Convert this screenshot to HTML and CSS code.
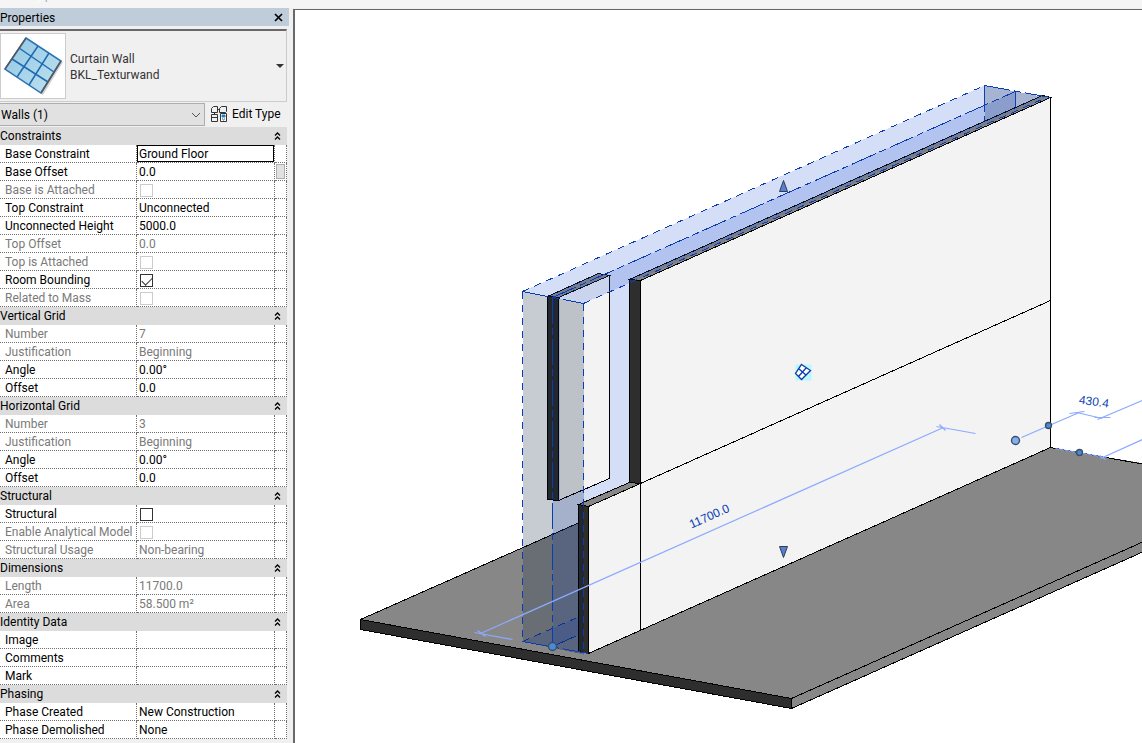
FILE: index.html
```html
<!DOCTYPE html>
<html lang="en">
<head>
<meta charset="utf-8">
<title>Properties</title>
<link rel="stylesheet" href="styles.css">
</head>
<body>
<svg class="defs" width="0" height="0" aria-hidden="true">
  <symbol id="fold" viewBox="0 0 7 8"><path d="M1 3.500L3.500 1L6 3.500M1 7.500L3.500 5L6 7.500" fill="none" stroke="#000" stroke-width="1.300"/></symbol>
</svg>
<div class="ribbon"><span class="ribbon-text">Modify <span class="ribbon-bar">|</span> Walls</span></div>
<div class="workspace">
<aside class="panel">
  <header class="panel-title">
    <span>Properties</span>
    <button class="close" type="button" aria-label="Close"><svg width="9" height="9" viewBox="0 0 9 9"><path d="M1 1L8 8M8 1L1 8" stroke="#000" stroke-width="1.700"/></svg></button>
  </header>
  <button class="type-picker" type="button">
    <span class="thumb">
      <svg width="64" height="64" viewBox="0 0 64 64">
        <defs><linearGradient id="glass" x1="0" y1="0" x2="1" y2="1"><stop offset="0" stop-color="#8fc7e4"/><stop offset="1" stop-color="#c2e2ef"/></linearGradient></defs>
        <path d="M26 5L62 28L42 61L5 37Z" fill="#9aa3aa" opacity=".5"/>
        <path d="M25 4L60 27L40 59L4 35Z" fill="url(#glass)" stroke="#2a74b4" stroke-width="1.500"/>
        <path d="M37 12L16 43M48 19L28 51M18 14L53 38M11 25L47 48" stroke="#1f6bb3" stroke-width="1.500"/>
        <path d="M25 4L4 35M60 27L40 59" stroke="#55585f" stroke-width="1.500"/>
      </svg>
    </span>
    <span class="type-name">Curtain Wall<br>BKL_Texturwand</span>
    <svg class="caret" width="8" height="4" viewBox="0 0 8 4"><path d="M0 0H8L4 4Z" fill="#333"/></svg>
  </button>
  <div class="filter">
    <div class="select-wrap">
      <select class="filter-select" aria-label="Category"><option>Walls (1)</option></select>
      <svg class="select-arrow" width="10" height="6" viewBox="0 0 10 6"><path d="M1 1L5 5L9 1" fill="none" stroke="#555"/></svg>
    </div>
    <button class="edit-type" type="button">
      <svg width="16" height="16" viewBox="0 0 16 16" fill="none" stroke="#333"><path d="M.5 2.500L2.500.5H6.500V6.500H.5ZM8.500 2.500L10.500.5H15.500V5.500L14.500 6.500H8.500ZM6.500 3.500H8.500M.5 8.500H6.500V15.500H.5ZM.5 11.500H6.500M3.500 6.500V8.500"/><path d="M9.500 7.500H15.500V15.500H9.500Z" fill="#fff"/><path d="M11 9H14V11H11Z" fill="#1682d4" stroke="#1682d4"/><path d="M11 13H12M13 13H14M12 14H13" stroke="#555"/></svg>
      <span>Edit Type</span>
    </button>
  </div>
  <table class="props">
    <colgroup><col class="c-name"><col class="c-value"><col class="c-end"></colgroup>
    <tbody>
      <tr class="group"><th colspan="3"><button type="button">Constraints<svg width="7" height="8"><use href="#fold"/></svg></button></th></tr>
      <tr><th><label for="base">Base Constraint</label></th><td class="editing"><input id="base" class="edit" type="text" value="Ground Floor"></td><td></td></tr>
      <tr><th>Base Offset</th><td>0.0</td><td class="assoc"><button class="assoc-button" type="button" aria-label="Associate parameter"></button></td></tr>
      <tr class="off"><th><label for="ba">Base is Attached</label></th><td><input id="ba" type="checkbox" disabled></td><td></td></tr>
      <tr><th>Top Constraint</th><td>Unconnected</td><td></td></tr>
      <tr><th>Unconnected Height</th><td>5000.0</td><td></td></tr>
      <tr class="off"><th>Top Offset</th><td>0.0</td><td></td></tr>
      <tr class="off"><th><label for="ta">Top is Attached</label></th><td><input id="ta" type="checkbox" disabled></td><td></td></tr>
      <tr><th><label for="rb">Room Bounding</label></th><td><input id="rb" type="checkbox" checked></td><td></td></tr>
      <tr class="off"><th><label for="rm">Related to Mass</label></th><td><input id="rm" type="checkbox" disabled></td><td></td></tr>
    </tbody>
    <tbody>
      <tr class="group"><th colspan="3"><button type="button">Vertical Grid<svg width="7" height="8"><use href="#fold"/></svg></button></th></tr>
      <tr class="off"><th>Number</th><td>7</td><td></td></tr>
      <tr class="off"><th>Justification</th><td>Beginning</td><td></td></tr>
      <tr><th>Angle</th><td>0.00°</td><td></td></tr>
      <tr><th>Offset</th><td>0.0</td><td></td></tr>
    </tbody>
    <tbody>
      <tr class="group"><th colspan="3"><button type="button">Horizontal Grid<svg width="7" height="8"><use href="#fold"/></svg></button></th></tr>
      <tr class="off"><th>Number</th><td>3</td><td></td></tr>
      <tr class="off"><th>Justification</th><td>Beginning</td><td></td></tr>
      <tr><th>Angle</th><td>0.00°</td><td></td></tr>
      <tr><th>Offset</th><td>0.0</td><td></td></tr>
    </tbody>
    <tbody>
      <tr class="group"><th colspan="3"><button type="button">Structural<svg width="7" height="8"><use href="#fold"/></svg></button></th></tr>
      <tr><th><label for="st">Structural</label></th><td><input id="st" type="checkbox"></td><td></td></tr>
      <tr class="off"><th><label for="am">Enable Analytical Model</label></th><td><input id="am" type="checkbox" disabled></td><td></td></tr>
      <tr class="off"><th>Structural Usage</th><td>Non-bearing</td><td></td></tr>
    </tbody>
    <tbody>
      <tr class="group"><th colspan="3"><button type="button">Dimensions<svg width="7" height="8"><use href="#fold"/></svg></button></th></tr>
      <tr class="off"><th>Length</th><td>11700.0</td><td></td></tr>
      <tr class="off"><th>Area</th><td>58.500 m²</td><td></td></tr>
    </tbody>
    <tbody>
      <tr class="group"><th colspan="3"><button type="button">Identity Data<svg width="7" height="8"><use href="#fold"/></svg></button></th></tr>
      <tr><th>Image</th><td></td><td></td></tr>
      <tr><th>Comments</th><td></td><td></td></tr>
      <tr><th>Mark</th><td></td><td></td></tr>
    </tbody>
    <tbody>
      <tr class="group"><th colspan="3"><button type="button">Phasing<svg width="7" height="8"><use href="#fold"/></svg></button></th></tr>
      <tr><th>Phase Created</th><td>New Construction</td><td></td></tr>
      <tr><th>Phase Demolished</th><td>None</td><td></td></tr>
    </tbody>
  </table>
</aside>
<main class="view">
  <svg class="scene" viewBox="295 10 847 733" preserveAspectRatio="xMinYMin slice" role="img" aria-label="3D view of a curtain wall">
    <g transform="translate(.5 .5)">
      <g class="edge">
        <path class="slab" d="M360 619L791 698L1150 538V464L1050 447L578 522Z" stroke="none"/>
        <path class="slab" d="M791 698L1150 538V548L791 708Z"/>
        <path class="dark" d="M360 619L791 698V708L360 629Z"/>
        <path d="M360 619L579 522M1050 447L1150 465" fill="none"/>
      </g>
      <g class="soft">
        <path class="tint" d="M552 297L1015 91V440L552 646Z"/>
        <path class="tint" d="M522 641L579 616V653Z"/>
        <path class="shade" d="M984 85L1046 97V300H984Z"/>
      </g>
      <g class="guide">
        <path class="long" d="M552 646L579 634"/>
        <path class="short" d="M522 641L579 616"/>
        <path class="long" d="M1015 91V120"/>
        <path class="long" d="M984 85V125" stroke-dasharray="10 8"/>
      </g>
      <g class="edge">
        <path class="slab" d="M547 296L598 273L609 275L559 298Z"/>
        <path class="dark" d="M547 296L558 297V500L547 499Z"/>
        <path class="face" d="M559 297L609 275V478L559 500" stroke="none"/>
        <path d="M558 297L609 275V478L558 500" fill="none"/>
        <path class="face" d="M640 280L1050 97V447L588 653V506L640 483Z"/>
        <path class="slab" d="M629 279L1042 95L1050 97L640 280Z"/>
        <path class="dark" d="M629 279L640 280V483L629 482Z"/>
        <path class="slab" d="M578 504L629 482L640 483L588 506Z"/>
        <path class="dark" d="M578 504L588 506V653L578 651Z"/>
        <path d="M640 483L1050 300M640 483V630" fill="none"/>
      </g>
      <g class="soft">
        <path class="tint" d="M522 291L984 85L1046 97L583 303Z"/>
        <path class="shade" d="M522 291L583 303V654L522 641Z"/>
      </g>
      <g class="guide">
        <path class="short" d="M522 291V641M583 303V653"/>
        <path class="short" d="M522 291L984 85M583 303L1046 97"/>
        <path class="long" d="M552 297L1015 91M552 297V646"/>
        <path class="long" d="M522 291L583 303M984 85L1050 97M522 641L588 653"/>
      </g>
      <g class="dim">
        <path d="M480 633L943 427M474 632L512 639M477 630L485 636M936 426L975 433M939 424L945 430"/>
        <path d="M1021 437L1081 411M1069 413L1084 411M1076 412L1102 418M1097 419L1142 400M1094 417L1110 417M1055 448L1106 457M1100 458L1142 439M1099 455L1105 459"/>
      </g>
      <g class="grip">
        <circle class="pick" cx="1015" cy="440" r="4"/><circle cx="1048" cy="425" r="3"/><circle cx="1079" cy="452" r="3"/><circle cx="552" cy="646" r="4"/>
      </g>
      <path class="flip" d="M783 180L787 191H779ZM783 557L779 546H787Z"/>
      <path d="M795 364H811V380H795Z" fill="#b9f7ff"/>
      <path d="M801 364L810 370L801 379L795 373ZM798 368L806 375M806 367L798 376" fill="#fff" stroke="#0b3aa8" stroke-width="1.300"/>
      <text class="measure" transform="translate(691 528) rotate(-24)">11700.0</text>
      <text class="measure" transform="translate(1078 403) rotate(8)">430.4</text>
    </g>
  </svg>
</main>
</div>
</body>
</html>
```
FILE: styles.css
```css
* { box-sizing: border-box; }
body { margin: 0; min-height: 100vh; display: flex; flex-direction: column; overflow: hidden; background: #f0f0f0; color: #000; font: 12px/16px Roboto, "Open Sans", sans-serif; }
button, input, select { font: inherit; color: inherit; margin: 0; padding: 0; border: 0; background: none; border-radius: 0; }
.defs { display: none; }
.ribbon { flex: none; height: 8px; overflow: hidden; background: #f5f5f5; }
.ribbon-text { display: block; margin: -12px 0 0 5px; color: #fff; }
.ribbon-bar { color: #999; }
.workspace { flex: 1; display: flex; height: calc(100vh - 8px); gap: 4px; }
.panel { flex: none; width: 289px; }
.panel-title { display: flex; align-items: center; justify-content: space-between; height: 18px; padding: 1px 6px 0 0; background: #bfcddb; }
.close { display: flex; }
.type-picker { display: flex; align-items: center; width: 287px; height: 73px; margin-top: 3px; padding-right: 2px; border-top: 2px solid #696969; border-right: 1px solid #ccc; border-bottom: 1px solid #ccc; text-align: left; color: #333; }
.thumb { display: flex; width: 66px; height: 66px; border: 1px solid #ccc; background: #fff; }
.type-name { flex: 1; padding: 2px 0 0 4px; }
.filter { display: flex; align-items: center; height: 25px; }
.select-wrap { position: relative; width: 205px; height: 23px; }
.filter-select { appearance: none; width: 100%; height: 100%; padding-left: 1px; border: 1px solid #adadad; border-left: 0; background: #e1e1e1; }
.select-arrow { position: absolute; right: 4px; top: 9px; pointer-events: none; }
.edit-type { display: flex; align-items: center; gap: 5px; padding: 0 0 2px 6px; }
.props { width: 287px; table-layout: fixed; border-collapse: separate; border-spacing: 0; background: #fff; }
.c-name { width: 137px; }
.c-value { width: 138px; }
.c-end { width: 12px; }
.props th, .props td { height: 18px; padding: 0 0 0 2px; border-right: 1px dotted #707070; border-bottom: 1px dotted #707070; text-align: left; font-weight: 400; line-height: 16px; white-space: nowrap; }
.props th { padding-left: 5px; }
.props .off { color: #7a7a7a; }
.props .group th { padding: 0; border: 0; background: #dcdcdc; }
.group button { display: flex; align-items: center; justify-content: space-between; width: 100%; height: 18px; padding-right: 6px; }
.props .editing { padding: 0; }
.edit { display: block; width: 100%; height: 17px; padding-left: 1px; border: 1px solid #000; background: #fff; outline: 0; }
.props .assoc { padding: 0 0 0 1px; }
.assoc-button { display: block; width: 9px; height: 15px; background: #e1e1e1; border: 1px solid #adadad; }
input[type="checkbox"] { appearance: none; display: block; width: 13px; height: 13px; margin: 2px 0 0 1px; border: 1px solid #333; background: #fff; }
input[type="checkbox"]:disabled { border-color: #ccc; }
input[type="checkbox"]:checked::after { content: ""; display: block; width: 9px; height: 5px; margin: 2px 0 0 1px; border: solid #333; border-width: 0 0 1px 1px; transform: rotate(-45deg); }
.view { flex: 1; min-width: 0; margin-top: 1px; border-top: 1px solid #696969; border-left: 2px solid #696969; background: #fff; }
.scene { display: block; width: 100%; height: 100%; }
.edge { stroke: #000; shape-rendering: crispEdges; }
.soft { stroke: none; shape-rendering: crispEdges; }
.slab { fill: #878787; }
.dark { fill: #2e2e2e; }
.face { fill: #f3f3f3; }
.tint { fill: rgba(29, 81, 208, .19); }
.shade { fill: rgba(0, 18, 50, .22); }
.guide { fill: none; stroke: #0b3db2; shape-rendering: crispEdges; }
.short { stroke-dasharray: 7 6; }
.long { stroke-dasharray: 26 4 7 4; }
.dim { fill: none; stroke: #8cabff; stroke-width: 1.2; }
.grip { fill: #4a8ad8; stroke: #3d4f66; stroke-width: 1.4; }
.pick { fill: #7fb0f0; }
.flip { fill: #5580d8; stroke: #333c4c; }
.measure { font: 12px "Liberation Sans", sans-serif; fill: #0b3db2; }
```
